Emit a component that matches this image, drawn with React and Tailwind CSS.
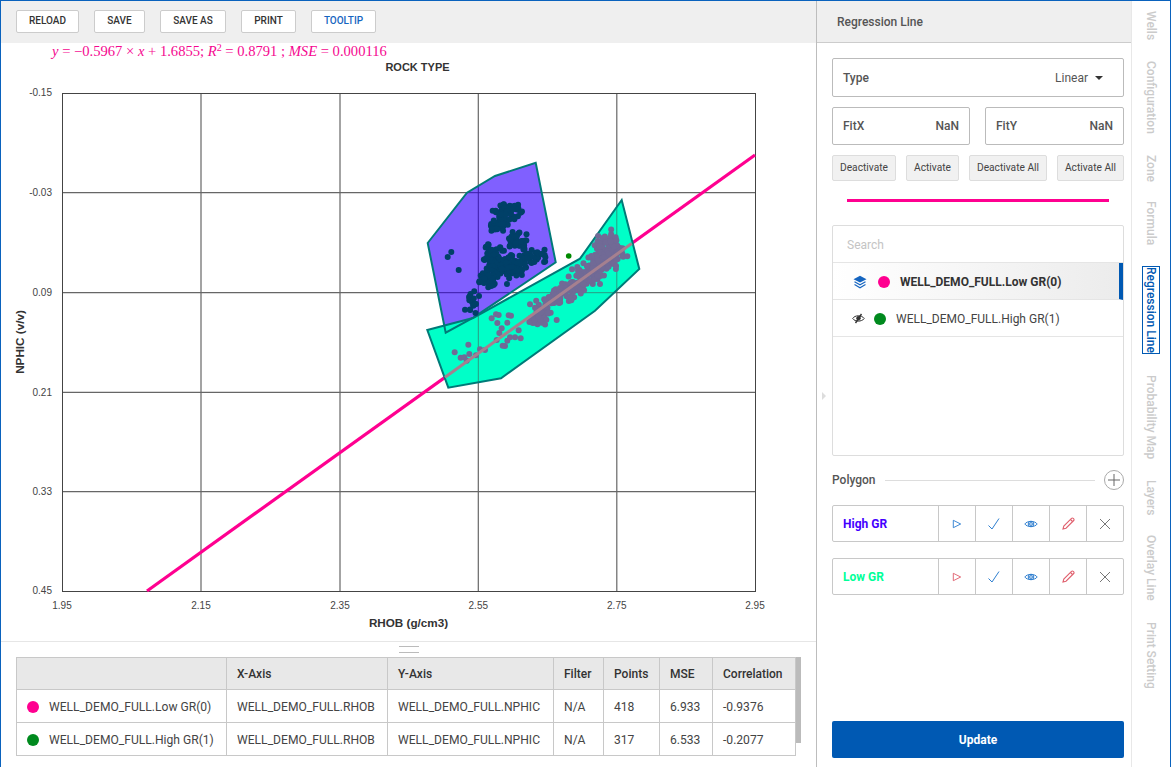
import React from "react";

function rng(seed) {
  let a = seed;
  return () => {
    a = (a + 0x6d2b79f5) | 0;
    let t = Math.imul(a ^ (a >>> 15), 1 | a);
    t = (t + Math.imul(t ^ (t >>> 7), 61 | t)) ^ t;
    return ((t ^ (t >>> 14)) >>> 0) / 4294967296;
  };
}
function gauss(r) {
  return (r() + r() + r() - 1.5) * 1.2;
}
function cluster(seed, list) {
  const r = rng(seed);
  const out = [];
  for (const [x, y, sx, sy, n, rot = 0] of list) {
    for (let i = 0; i < n; i++) {
      const a = gauss(r) * sx;
      const b = gauss(r) * sy;
      const c = Math.cos(rot), d = Math.sin(rot);
      out.push([410 + (x + a * c - b * d) / 3, 150 + (y + a * d + b * c) / 3]);
    }
  }
  return out;
}
const navy = cluster(7, [
  [285, 190, 38, 24, 60, -0.5],
  [265, 226, 22, 14, 20],
  [285, 345, 50, 28, 130],
  [320, 278, 34, 24, 40],
  [372, 320, 36, 20, 34],
  [232, 392, 24, 22, 36],
  [188, 450, 14, 28, 14],
  [250, 300, 24, 24, 20],
]).concat([
  [447.7, 257], [451.3, 252], [458.7, 270], [479, 296], [507, 284], [470, 309.5], [465, 309.8],
]);
const slate = cluster(11, [
  [598, 305, 42, 34, 150, -0.62],
  [535, 372, 42, 26, 80, -0.62],
  [480, 420, 42, 22, 55, -0.62],
  [430, 445, 32, 18, 40, -0.4],
  [390, 498, 30, 20, 40, -0.3],
]).concat(
  [[134,607],[152,623],[163,622],[178,612],[175,584],[170,632],[198,616],[210,598],[225,600],[245,505],[258,493],[266,495],[262,519],[292,518],[296,496],[303,497],[275,535],[268,549],[260,570],[292,572],[300,562],[315,562],[332,565],[326,541],[285,588],[278,587],[486,358],[502,351],[570,402],[440,510],[360,463],[375,473]].map(([x, y]) => [410 + x / 3, 150 + y / 3])
);

const purple = "427.7,243 467,192.7 495,176 535.7,162.7 555.7,262.3 473.3,317.7 445.7,332.7";
const teal = "427.3,330 473,318 580,258.7 621.7,200 639.3,269 595,310.7 501,378.3 448.3,387.7";

const xs = [[62, "1.95"], [201, "2.15"], [340, "2.35"], [478.3, "2.55"], [616.8, "2.75"], [755, "2.95"]];
const ys = [[93, "-0.15"], [192.7, "-0.03"], [292.7, "0.09"], [392.3, "0.21"], [491.7, "0.33"], [591, "0.45"]];

function Chart() {
  const grid = (
    <>
      {xs.slice(1, 5).map(([x]) => <line key={x} x1={x} x2={x} y1={93} y2={591} />)}
      {ys.slice(1, 5).map(([y]) => <line key={y} x1={62} x2={755} y1={y} y2={y} />)}
    </>
  );
  return (
    <svg viewBox="1 43 815 598" className="block w-[815px] h-[598px] shrink-0" style={{ fontFamily: "'Liberation Sans', Arial, sans-serif" }}>
      <defs>
        <clipPath id="pp"><polygon points={purple} /></clipPath>
        <clipPath id="tp"><polygon points={teal} /></clipPath>
      </defs>
      <text x="52" y="56" fontFamily="'Liberation Serif', serif" fontSize="14.6" fill="#f5078f">
        <tspan fontStyle="italic">y</tspan> = −0.5967 × <tspan fontStyle="italic">x</tspan> + 1.6855; <tspan fontStyle="italic">R</tspan><tspan fontSize="10" dy="-5">2</tspan><tspan dy="5"> = 0.8791 ; </tspan><tspan fontStyle="italic">MSE</tspan> = 0.000116
      </text>
      <text x="417.5" y="71" textAnchor="middle" fontSize="11" fontWeight="700" fill="#333">ROCK TYPE</text>
      <g stroke="#666" strokeWidth="1.2">{grid}</g>
      <rect x="62.5" y="93.5" width="693" height="498" fill="none" stroke="#444" strokeWidth="1" />
      {ys.map(([y, t]) => <text key={t} x="52" y={y + 3.4} textAnchor="end" fontSize="10" fill="#444">{t}</text>)}
      {xs.map(([x, t]) => <text key={t} x={x} y="609" textAnchor="middle" fontSize="10" fill="#444">{t}</text>)}
      <text x="408.5" y="627" textAnchor="middle" fontSize="11.7" fontWeight="700" fill="#333">RHOB (g/cm3)</text>
      <text transform="translate(24 342) rotate(-90)" textAnchor="middle" fontSize="11.7" fontWeight="700" fill="#333">NPHIC (v/v)</text>
      <line x1="147" y1="591" x2="755" y2="155" stroke="#ff0090" strokeWidth="3.2" />
      <polygon points={purple} fill="#8060ff" />
      <polygon points={teal} fill="#00ffc8" />
      <g clipPath="url(#pp)" stroke="#3a1aa8" strokeWidth="1">{grid}</g>
      <g clipPath="url(#tp)" stroke="#2a9a80" strokeWidth="1">{grid}</g>
      <polygon points={purple} fill="none" stroke="#007a78" strokeWidth="2" />
      <polygon points={teal} fill="none" stroke="#007a78" strokeWidth="2" />
      <g fill="#004068">{navy.map(([x, y], i) => <circle key={i} cx={x} cy={y} r="3" />)}</g>
      <g fill="#716a96">{slate.map(([x, y], i) => <circle key={i} cx={x} cy={y} r="3" />)}</g>
      <line x1="445" y1="377.3" x2="631.7" y2="243.5" stroke="#a5808f" strokeWidth="3" />
      <circle cx="568.7" cy="256" r="2.8" fill="#008a00" />
    </svg>
  );
}

function Btn({ children, blue, w }) {
  return (
    <button className={`h-[23px] ${w} bg-white border border-[#ccc] rounded-[2px] text-[10px] font-medium leading-none ${blue ? "text-[#1565c0]" : "text-[#333]"}`}>
      {children}
    </button>
  );
}

const H = "border border-[#c8c8c8] px-[10px] pt-[1px] font-medium text-left text-[12px] text-[#333]";
const C = "border border-[#c8c8c8] px-[10px] pt-[2px] text-left text-[12.1px] text-[#444]";

function Dot({ c }) {
  return <span className={`inline-block w-[12px] h-[12px] rounded-full ${c}`} />;
}

function ResultTable() {
  const rows = [
    ["bg-[#ff0090]", "WELL_DEMO_FULL.Low GR(0)", "418", "6.933", "-0.9376"],
    ["bg-[#008a1e]", "WELL_DEMO_FULL.High GR(1)", "317", "6.533", "-0.2077"],
  ];
  return (
    <div className="flex items-start mt-[15px] ml-[15px]">
      <table className="table-fixed border-collapse w-[779px]">
        <colgroup>
          <col className="w-[210px]" /><col className="w-[161px]" /><col className="w-[166px]" /><col className="w-[50px]" /><col className="w-[56px]" /><col className="w-[53px]" /><col className="w-[83px]" />
        </colgroup>
        <thead>
          <tr className="h-[32px] bg-[#e8e8e8]">
            <th className={H}></th><th className={H}>X-Axis</th><th className={H}>Y-Axis</th><th className={H}>Filter</th><th className={H}>Points</th><th className={H}>MSE</th><th className={H}>Correlation</th>
          </tr>
        </thead>
        <tbody>
          {rows.map((r) => (
            <tr key={r[1]} className="h-[33px]">
              <td className={C}>
                <div className="flex items-center gap-[10px] whitespace-nowrap"><Dot c={r[0]} /><span>{r[1]}</span></div>
              </td>
              <td className={C}>WELL_DEMO_FULL.RHOB</td>
              <td className={C}>WELL_DEMO_FULL.NPHIC</td>
              <td className={C}>N/A</td>
              <td className={C}>{r[2]}</td>
              <td className={C}>{r[3]}</td>
              <td className={C}>{r[4]}</td>
            </tr>
          ))}
        </tbody>
      </table>
      <div className="w-[5px] h-[86px] bg-[#bbb]" />
    </div>
  );
}

function Play({ c }) {
  return <svg width="12" height="12" viewBox="0 0 13 13" fill="none" stroke={c} strokeWidth="1"><path d="M2.5 2.5v8l8-4z" /></svg>;
}
function Check() {
  return <svg width="14" height="14" viewBox="0 0 14 14" fill="none" stroke="#2f7fd0" strokeWidth="1"><path d="M1.5 8.5 5 12 12 1.5" /></svg>;
}
function Eye() {
  return (
    <svg width="14" height="10" viewBox="0 0 14 10" fill="none" stroke="#2f7fd0" strokeWidth="1">
      <path d="M.8 5C3 1.6 11 1.6 13.2 5 11 8.4 3 8.4.8 5z" /><circle cx="7" cy="5" r="2.8" /><circle cx="7" cy="5" r="1.4" />
    </svg>
  );
}
function Pencil() {
  return (
    <svg width="13" height="13" viewBox="0 0 13 13" fill="none" stroke="#e0606e" strokeWidth="1.1">
      <path d="M1 12l.8-3L9.5 1.3a1.2 1.2 0 0 1 1.7 0l.5.5a1.2 1.2 0 0 1 0 1.7L4 11.2z" /><path d="M8.5 2.5l2 2" />
    </svg>
  );
}
function Cross() {
  return <svg width="12" height="12" viewBox="0 0 12 12" fill="none" stroke="#777" strokeWidth="1"><path d="M1 1l10 10M11 1 1 11" /></svg>;
}
function Cell({ children }) {
  return <div className="w-[37px] h-full flex items-center justify-center border-l border-[#c8c8c8]">{children}</div>;
}
function PolyRow({ name, color, play, className = "" }) {
  return (
    <div className={`h-[37px] flex items-center border border-[#c8c8c8] rounded-[2px] ${className}`}>
      <div className={`flex-1 pl-[10px] text-[12px] font-bold ${color}`}>{name}</div>
      <Cell><Play c={play} /></Cell>
      <Cell><Check /></Cell>
      <Cell><Eye /></Cell>
      <Cell><Pencil /></Cell>
      <Cell><Cross /></Cell>
    </div>
  );
}
function Small({ children, w }) {
  return (
    <button className={`h-[26px] ${w} bg-[#f1f1f1] border border-[#ddd] rounded-[2px] text-[10.2px] text-[#444] whitespace-nowrap`}>{children}</button>
  );
}

function LayersIcon() {
  return (
    <svg width="14" height="14" viewBox="0 0 14 14">
      <path d="M7 .8 13.5 4.2 7 7.6.5 4.2z" fill="#1565c0" />
      <path d="M1.5 6.8 7 9.8l5.5-3M1.5 9.6 7 12.8l5.5-3.2" fill="none" stroke="#1565c0" strokeWidth="1.1" />
    </svg>
  );
}
function EyeOff() {
  return (
    <svg width="13" height="11" viewBox="0 0 13 11" fill="none" stroke="#333" strokeWidth="1">
      <path d="M.7 5.5C2.7 2 9.5 1.8 12.3 5.5 9.5 9 3 9 .7 5.5z" /><circle cx="6.5" cy="5.3" r="1.8" fill="#333" /><path d="M9.5 1 3.5 10" strokeWidth="1.4" />
    </svg>
  );
}

function Panel() {
  return (
    <div className="relative w-[315px] shrink-0 flex flex-col border-l border-[#bdbdbd] h-full">
      <div className="h-[42px] shrink-0 bg-[#efefef] border-b border-[#ccc] flex items-center pl-[20px] text-[12px] font-medium text-[#555]">Regression Line</div>
      <span className="absolute left-[5px] top-[391px] w-0 h-0 border-y-[4px] border-y-transparent border-l-[4px] border-l-[#ddd]" />
      <div className="flex-1 flex flex-col pl-[15px] pr-[7px] bg-white">
        <div className="mt-[15px] h-[39px] border border-[#bbb] rounded-[2px] flex items-center pl-[10px] pr-[20px] text-[12px] text-[#555]">
          <span className="font-medium">Type</span>
          <span className="ml-auto">Linear</span>
          <span className="ml-[7px] w-0 h-0 border-x-[4px] border-x-transparent border-t-[4px] border-t-[#333]" />
        </div>
        <div className="mt-[10px] flex justify-between">
          {[["FitX", "w-[138px]"], ["FitY", "w-[139px]"]].map(([t, w]) => (
            <div key={t} className={`${w} h-[38px] border border-[#bbb] rounded-[2px] flex items-center justify-between pl-[10px] pr-[10px] text-[12px] font-medium text-[#555]`}>
              <span>{t}</span><span>NaN</span>
            </div>
          ))}
        </div>
        <div className="mt-[10px] flex justify-between">
          <Small w="w-[64px]">Deactivate</Small>
          <Small w="w-[53px]">Activate</Small>
          <Small w="w-[78px]">Deactivate All</Small>
          <Small w="w-[67px]">Activate All</Small>
        </div>
        <div className="mt-[18px] mx-[15px] h-[3px] bg-[#ff0090]" />
        <div className="mt-[23px] h-[231px] border border-[#ddd] rounded-[2px] flex flex-col">
          <div className="h-[37px] border-b border-[#e5e5e5] flex items-center pl-[14px] pt-[1px] text-[12px] text-[#c4c4c4]">Search</div>
          <div className="h-[37px] border-b border-[#e5e5e5] border-r-[4px] border-r-[#0059b3] bg-gradient-to-r from-white to-[#ececec] flex items-center pl-[20px] pt-[1px] text-[12px] font-bold text-[#333]">
            <LayersIcon />
            <span className="ml-[11px] w-[12px] h-[12px] rounded-full bg-[#ff0090]" />
            <span className="ml-[10px]">WELL_DEMO_FULL.Low GR(0)</span>
          </div>
          <div className="h-[37px] border-b border-[#e5e5e5] flex items-center pl-[19px] pt-[1px] text-[12px] text-[#444]">
            <EyeOff />
            <span className="ml-[9px] w-[12px] h-[12px] rounded-full bg-[#008a1e]" />
            <span className="ml-[10px]">WELL_DEMO_FULL.High GR(1)</span>
          </div>
        </div>
        <div className="mt-[14px] flex items-center h-[20px]">
          <span className="text-[12px] font-medium text-[#555]">Polygon</span>
          <span className="ml-[9px] flex-1 h-px bg-[#ddd]" />
          <span className="ml-[9px] w-[20px] h-[20px] rounded-full border border-[#aaa] flex items-center justify-center">
            <svg width="12" height="12" viewBox="0 0 12 12" fill="none" stroke="#666" strokeWidth="1"><path d="M6 0v12M0 6h12" /></svg>
          </span>
        </div>
        <PolyRow className="mt-[15px]" name="High GR" color="text-[#4400ff]" play="#2f7fd0" />
        <PolyRow className="mt-[16px]" name="Low GR" color="text-[#00ff99]" play="#e0606e" />
        <button className="mt-auto mb-[9px] h-[37px] bg-[#0059b3] rounded-[2px] text-white text-[12px] font-bold">Update</button>
      </div>
    </div>
  );
}

function Tabs() {
  const tabs = [
    ["Wells", ""], ["Configuration", ""], ["Zone", ""], ["Formula", "-mt-[2px]"], ["Regression Line", ""],
    ["Probability Map", ""], ["Layers", ""], ["Overlay Line", "-mt-[2px]"], ["Print Setting", ""],
  ];
  return (
    <div className="flex-1 border-l border-[#e8e8e8] flex flex-col items-center pt-[10px] gap-[21px] pr-[1px]">
      {tabs.map(([t, m]) => (
        <div
          key={t}
          className={`[writing-mode:vertical-rl] text-[12px] font-medium leading-[16px] whitespace-nowrap ${m} ${
            t === "Regression Line" ? "text-[#0059b3] border border-[#0059b3] font-bold" : "text-[#cbcbcb]"
          }`}
        >
          {t}
        </div>
      ))}
    </div>
  );
}

export default function App() {
  return (
    <div
      className="w-[1171px] h-[767px] overflow-hidden flex bg-white border-x border-t border-[#0a62bd]"
      style={{ fontFamily: "Roboto, sans-serif" }}
    >
      <div className="w-[815px] shrink-0 flex flex-col">
        <div className="h-[42px] shrink-0 bg-[#efefef] flex items-center pl-[15px] gap-[15px] pb-[2px]">
          <Btn w="w-[63px]">RELOAD</Btn><Btn w="w-[51px]">SAVE</Btn><Btn w="w-[66px]">SAVE AS</Btn><Btn w="w-[55px]">PRINT</Btn><Btn w="w-[65px]" blue>TOOLTIP</Btn>
        </div>
        <Chart />
        <div className="border-t border-[#e6e6e6] relative">
          <div className="absolute left-[398px] top-[4px] w-[20px] h-[7px] border-y border-[#bbb]" />
          <ResultTable />
        </div>
      </div>
      <Panel />
      <Tabs />
    </div>
  );
}
